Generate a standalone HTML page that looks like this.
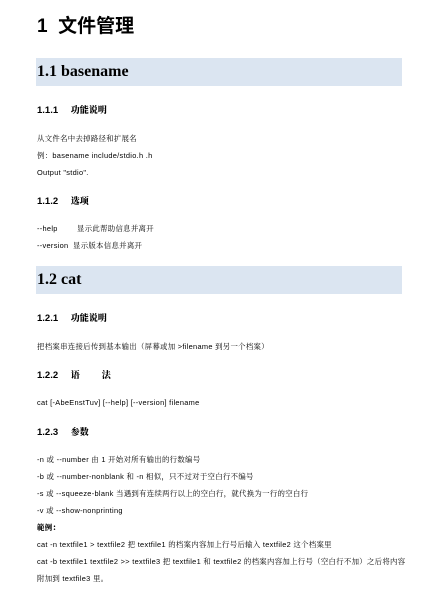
<!DOCTYPE html>
<html><head><meta charset="utf-8"><style>
body{margin:0;width:421px;height:597px;background:#fff;position:relative;overflow:hidden;font-family:"Liberation Sans","Noto Sans CJK SC",sans-serif;color:#000}
.l{position:absolute;left:37px;white-space:nowrap;height:12px;line-height:12px;font-size:7px}
.h3{font-size:9.5px;font-weight:bold;height:14px;line-height:14px}
.h3 b{font-family:"Noto Serif CJK SC",serif;font-weight:900;margin-left:10px;font-size:9px}
.band{position:absolute;left:36px;width:366px;height:28px;background:#dbe5f1}
.band span{position:absolute;left:1px;top:5px;font-family:"Liberation Serif",serif;font-weight:bold;font-size:16px;line-height:18px}
.zh{font-family:"Liberation Sans","Noto Serif CJK SC",sans-serif;font-size:7.4px;letter-spacing:.3px}
</style></head><body>
<div class="l" style="top:14px;height:26px;line-height:26px;font-size:19px;font-weight:bold">1&nbsp; 文件管理</div>
<div class="band" style="top:58px"><span>1.1 basename</span></div>
<div class="l h3" style="top:103px">1.1.1 <b>功能说明</b></div>
<div class="l zh" style="top:133px">从文件名中去掉路径和扩展名</div>
<div class="l zh" style="top:150px">例：basename include/stdio.h .h</div>
<div class="l zh" style="top:167px">Output "stdio".</div>
<div class="l h3" style="top:194px">1.1.2 <b>选项</b></div>
<div class="l zh" style="top:223px">--help<span style="position:absolute;left:40px">显示此帮助信息并离开</span></div>
<div class="l zh" style="top:240px">--version<span style="position:absolute;left:36px">显示版本信息并离开</span></div>
<div class="band" style="top:266px"><span>1.2 cat</span></div>
<div class="l h3" style="top:311px">1.2.1 <b>功能说明</b></div>
<div class="l zh" style="top:341px">把档案串连接后传到基本输出（屏幕或加 &gt;filename 到另一个档案）</div>
<div class="l h3" style="top:368px">1.2.2 <b>语<span style="margin-left:22px">法</span></b></div>
<div class="l zh" style="top:397px">cat [-AbeEnstTuv] [--help] [--version] filename</div>
<div class="l h3" style="top:425px">1.2.3 <b>参数</b></div>
<div class="l zh" style="top:454px">-n 或 --number 由 1 开始对所有输出的行数编号</div>
<div class="l zh" style="top:471px">-b 或 --number-nonblank 和 -n 相似，只不过对于空白行不编号</div>
<div class="l zh" style="top:488px">-s 或 --squeeze-blank 当遇到有连续两行以上的空白行，就代换为一行的空白行</div>
<div class="l zh" style="top:505px">-v 或 --show-nonprinting</div>
<div class="l zh" style="top:522px;font-weight:900">範例：</div>
<div class="l zh" style="top:539px">cat -n textfile1 &gt; textfile2 把 textfile1 的档案内容加上行号后输入 textfile2 这个档案里</div>
<div class="l zh" style="top:556px">cat -b textfile1 textfile2 &gt;&gt; textfile3 把 textfile1 和 textfile2 的档案内容加上行号（空白行不加）之后将内容</div>
<div class="l zh" style="top:573px">附加到 textfile3 里。</div>
</body></html>
